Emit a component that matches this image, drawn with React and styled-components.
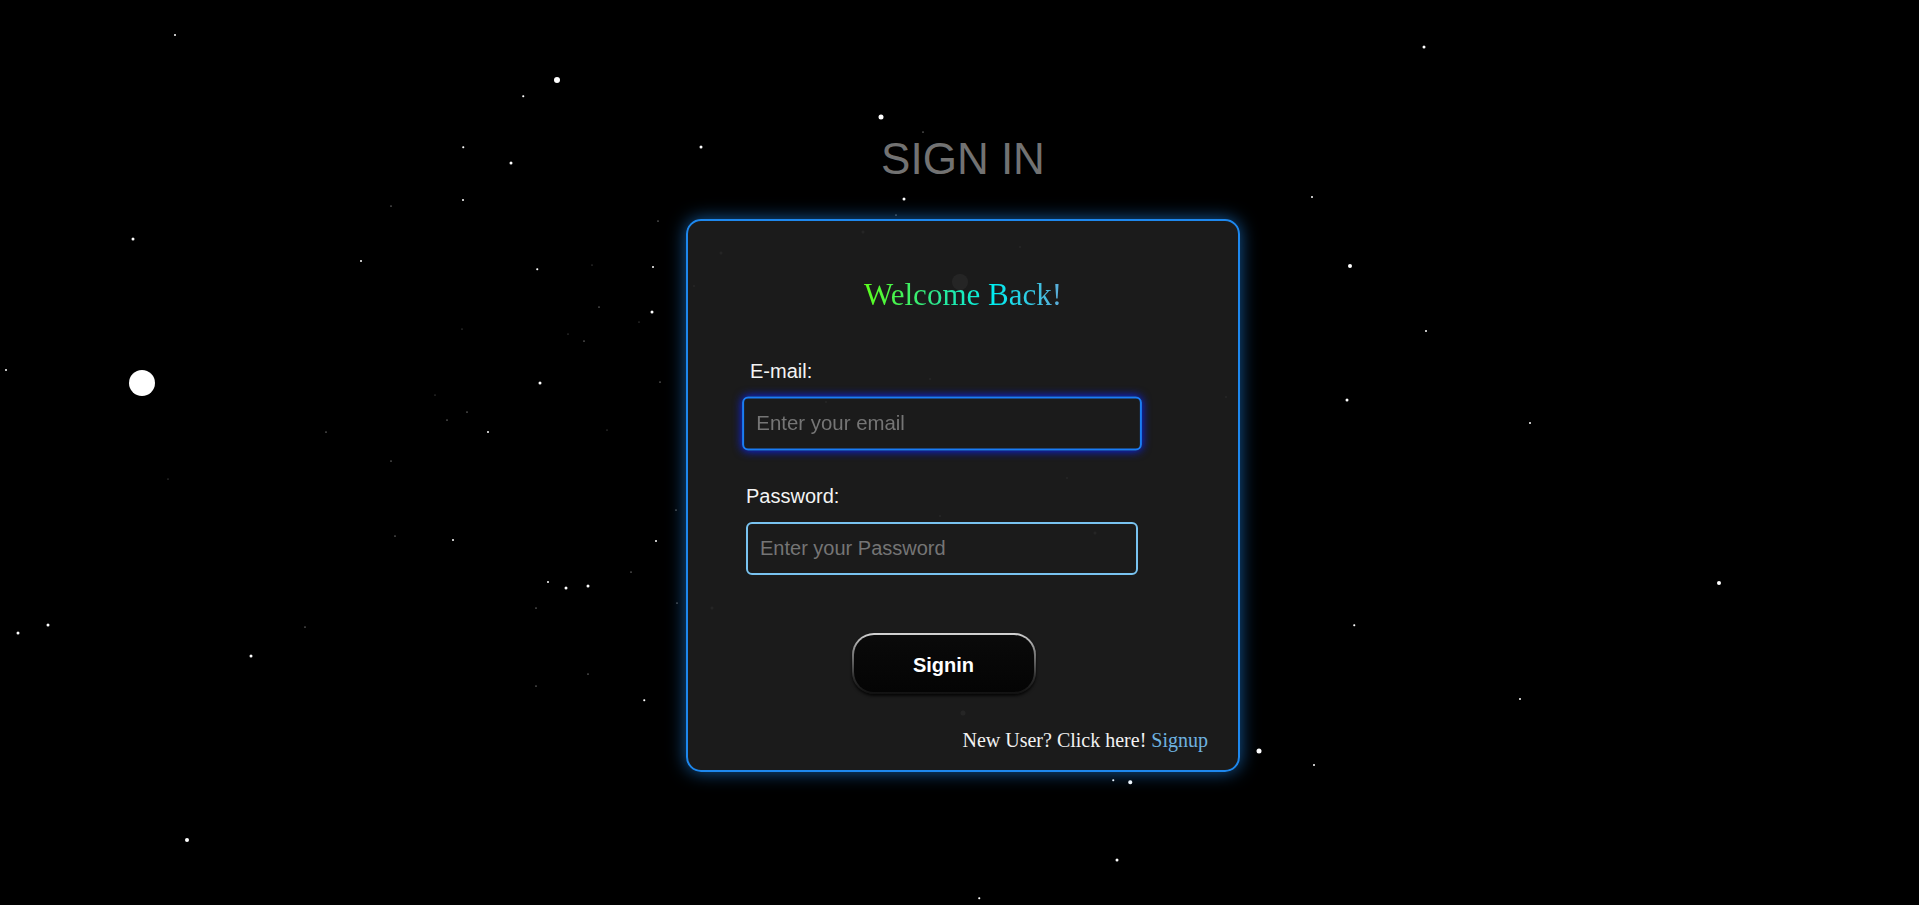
import React from "react";
import styled, { createGlobalStyle } from "styled-components";

const GlobalStyle = createGlobalStyle`
  html, body {
    margin: 0;
    padding: 0;
    background: #000;
    font-family: "Liberation Sans", Arial, sans-serif;
  }
  * { box-sizing: border-box; }
`;

const Page = styled.div`
  position: relative;
  min-height: 100vh;
  overflow: hidden;
  background: #000;
  display: flex;
  flex-direction: column;
  align-items: center;
  padding: 134px 0 0 7px;
`;

const Sky = styled.div`
  position: absolute;
  inset: 0;
  pointer-events: none;
`;

const Star = styled.span`
  position: absolute;
  border-radius: 50%;
  background: #fff;
  transform: translate(-50%, -50%);
`;

const Heading = styled.h1`
  position: relative;
  margin: 0 0 35px;
  font-family: "Liberation Sans", Arial, sans-serif;
  font-weight: 400;
  font-size: 44px;
  color: #727272;
  letter-spacing: 0;
`;

const Card = styled.div`
  position: relative;
  width: 554px;
  border: 2px solid #1e88ee;
  border-radius: 15px;
  background: rgba(28, 28, 28, 0.96);
  box-shadow: 0 0 18px rgba(30, 136, 238, 0.65);
  padding: 56px 0 18px;
  display: flex;
  flex-direction: column;
`;

const Welcome = styled.h2`
  margin: 0;
  text-align: center;
  font-family: "Liberation Serif", "Times New Roman", serif;
  font-weight: 400;
  font-size: 31px;
  line-height: normal;
`;

const Gradient = styled.span`
  background: linear-gradient(90deg, #5cff1c 0%, #2ee88a 35%, #00eef0 65%, #5eaad8 100%);
  -webkit-background-clip: text;
  background-clip: text;
  color: transparent;
`;

const Form = styled.form`
  margin: 47px 0 0 58px;
  width: 392px;
  display: flex;
  flex-direction: column;
`;

const Field = styled.div`
  display: flex;
  flex-direction: column;
  margin-top: ${(p) => (p.$first ? "0" : "35px")};
`;

const Label = styled.label`
  font-family: "Liberation Sans", Arial, sans-serif;
  font-size: 20px;
  line-height: 23px;
  color: #f4f4f4;
  margin: 0 0 14px ${(p) => (p.$indent ? "4px" : "0")};
`;

const Input = styled.input`
  width: 100%;
  height: 53px;
  padding: 0 12px;
  font-family: "Liberation Sans", Arial, sans-serif;
  font-size: 20px;
  color: #eee;
  background: transparent;
  border: 2px solid ${(p) => (p.$focused ? "#1a7cf5" : "#79c3f0")};
  border-radius: 6px;
  outline: none;
  box-shadow: ${(p) => (p.$focused ? "0 0 9px #0a24ff" : "none")};
  transform: ${(p) => (p.$focused ? "scale(1.02)" : "none")};
  &::placeholder {
    color: #757575;
  }
`;

const SubmitButton = styled.button`
  align-self: center;
  margin: 58px 0 0 3px;
  width: 184px;
  height: 61px;
  padding: 3px 0 0;
  border-radius: 22px;
  border: 2px solid transparent;
  background:
    linear-gradient(180deg, #0a0a0a, #040404) padding-box,
    linear-gradient(180deg, #d4d4d4 0%, #777 35%, #2a2a2a 75%, #111 100%) border-box;
  box-shadow: 0 2px 3px rgba(0, 0, 0, 0.8);
  color: #fff;
  font-family: "Liberation Sans", Arial, sans-serif;
  font-weight: 700;
  font-size: 20px;
  cursor: pointer;
`;

const Footer = styled.p`
  margin: 35px 0 0;
  padding-right: 30px;
  text-align: right;
  font-family: "Liberation Serif", "Times New Roman", serif;
  font-size: 20px;
  line-height: 23px;
  color: #f2f2f2;
`;

const SignupLink = styled.a`
  color: #6fb3e0;
  text-decoration: none;
`;

const stars = [
  [175, 35, 2], [557, 80, 6], [523, 96, 1.5], [463, 147, 1.5], [511, 163, 3],
  [463, 200, 2], [391, 206, 1], [133, 239, 3], [361, 261, 2], [658, 221, 1],
  [537, 269, 1.5], [592, 265, 1, 0.5], [653, 267, 2], [599, 307, 1], [652, 312, 3],
  [639, 322, 1, 0.5], [568, 334, 1, 0.5], [584, 341, 1], [462, 329, 1, 0.5], [6, 370, 2],
  [142, 383, 26], [540, 383, 3], [660, 382, 1], [435, 395, 1, 0.5], [467, 412, 1],
  [447, 420, 1], [326, 432, 1], [488, 432, 2], [607, 430, 1, 0.5],
  [1424, 47, 3], [1312, 197, 2], [1350, 266, 4], [1426, 331, 2], [1347, 400, 3], [1530, 423, 2],
  [391, 461, 1], [168, 479, 1, 0.5], [395, 536, 1], [453, 540, 2], [656, 541, 2],
  [631, 572, 1], [548, 582, 2], [566, 588, 3], [588, 586, 3], [677, 603, 1],
  [536, 608, 1], [676, 510, 1], [48, 625, 3], [18, 633, 3], [305, 627, 1],
  [251, 656, 3], [588, 674, 1], [536, 686, 1], [644, 700, 1.5], [187, 840, 4],
  [1719, 583, 4], [1354, 625, 1.5], [1520, 699, 2], [1259, 751, 5], [1314, 765, 2],
  [881, 117, 5], [701, 147, 3], [923, 132, 1], [904, 199, 3], [896, 215, 1],
  [1113, 780, 1.5], [1130, 782, 3.5], [1117, 860, 3], [979, 898, 1.5],
  [960, 282, 16], [863, 232, 3], [721, 253, 3], [1020, 247, 2], [694, 286, 2],
  [1226, 397, 2], [1095, 533, 3], [1067, 478, 2], [940, 516, 2], [826, 402, 2],
  [930, 379, 2], [712, 608, 3], [963, 713, 5], [904, 680, 2],
];

export default function App() {
  return (
    <>
      <GlobalStyle />
      <Page>
        <Sky aria-hidden="true">
          {stars.map(([x, y, s, o = 1], i) => (
            <Star
              key={i}
              style={{ left: x, top: y, width: s, height: s, opacity: o }}
            />
          ))}
        </Sky>
        <Heading>SIGN IN</Heading>
        <Card>
          <Welcome>
            <Gradient>Welcome Back!</Gradient>
          </Welcome>
          <Form onSubmit={(e) => e.preventDefault()}>
            <Field $first>
              <Label htmlFor="email" $indent>E-mail:</Label>
              <Input id="email" type="email" placeholder="Enter your email" $focused />
            </Field>
            <Field>
              <Label htmlFor="password">Password:</Label>
              <Input id="password" type="password" placeholder="Enter your Password" />
            </Field>
            <SubmitButton type="submit">Signin</SubmitButton>
          </Form>
          <Footer>
            New User? Click here! <SignupLink href="#">Signup</SignupLink>
          </Footer>
        </Card>
      </Page>
    </>
  );
}
